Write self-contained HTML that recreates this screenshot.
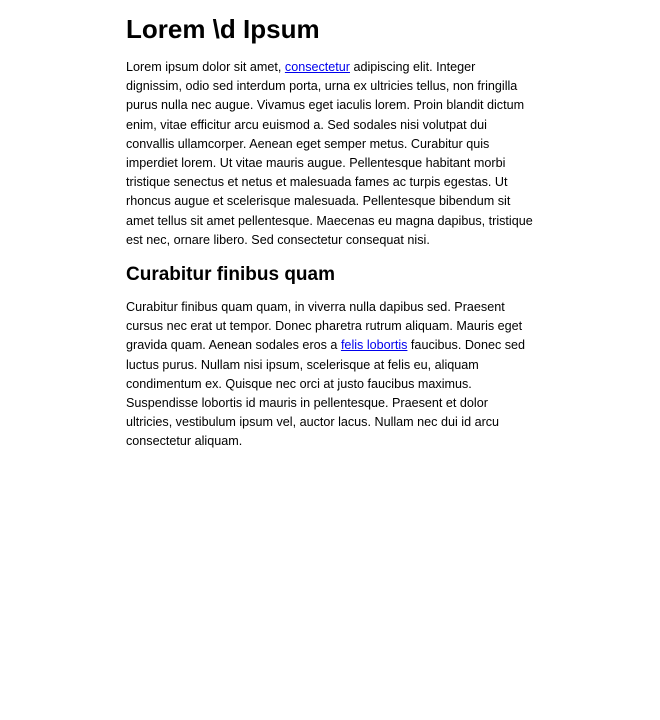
<!DOCTYPE html>
<html><head><meta charset="utf-8"><style>
body{margin:0;background:#fff;font-family:"Liberation Sans","DejaVu Sans",sans-serif;color:#000}
.w{position:absolute;left:126px;width:420px}
h1{position:absolute;left:126px;top:12px;margin:0;font-size:26px;line-height:34px;font-weight:bold;white-space:nowrap}
h2{position:absolute;left:126px;top:263px;margin:0;font-size:19px;line-height:24px;font-weight:bold;white-space:nowrap}
p{margin:0;font-size:12.6px;line-height:19.2px;white-space:nowrap}
a{color:#00e}
</style></head><body>
<h1>Lorem \d Ipsum</h1>
<div class="w" style="top:58px"><p>
Lorem ipsum dolor sit amet, <a href="#">consectetur</a> adipiscing elit. Integer<br>
dignissim, odio sed interdum porta, urna ex ultricies tellus, non fringilla<br>
purus nulla nec augue. Vivamus eget iaculis lorem. Proin blandit dictum<br>
enim, vitae efficitur arcu euismod a. Sed sodales nisi volutpat dui<br>
convallis ullamcorper. Aenean eget semper metus. Curabitur quis<br>
imperdiet lorem. Ut vitae mauris augue. Pellentesque habitant morbi<br>
tristique senectus et netus et malesuada fames ac turpis egestas. Ut<br>
rhoncus augue et scelerisque malesuada. Pellentesque bibendum sit<br>
amet tellus sit amet pellentesque. Maecenas eu magna dapibus, tristique<br>
est nec, ornare libero. Sed consectetur consequat nisi.</p></div>
<h2>Curabitur finibus quam</h2>
<div class="w" style="top:298px"><p>
Curabitur finibus quam quam, in viverra nulla dapibus sed. Praesent<br>
cursus nec erat ut tempor. Donec pharetra rutrum aliquam. Mauris eget<br>
gravida quam. Aenean sodales eros a <a href="#">felis lobortis</a> faucibus. Donec sed<br>
luctus purus. Nullam nisi ipsum, scelerisque at felis eu, aliquam<br>
condimentum ex. Quisque nec orci at justo faucibus maximus.<br>
Suspendisse lobortis id mauris in pellentesque. Praesent et dolor<br>
ultricies, vestibulum ipsum vel, auctor lacus. Nullam nec dui id arcu<br>
consectetur aliquam.</p></div>
</body></html>
